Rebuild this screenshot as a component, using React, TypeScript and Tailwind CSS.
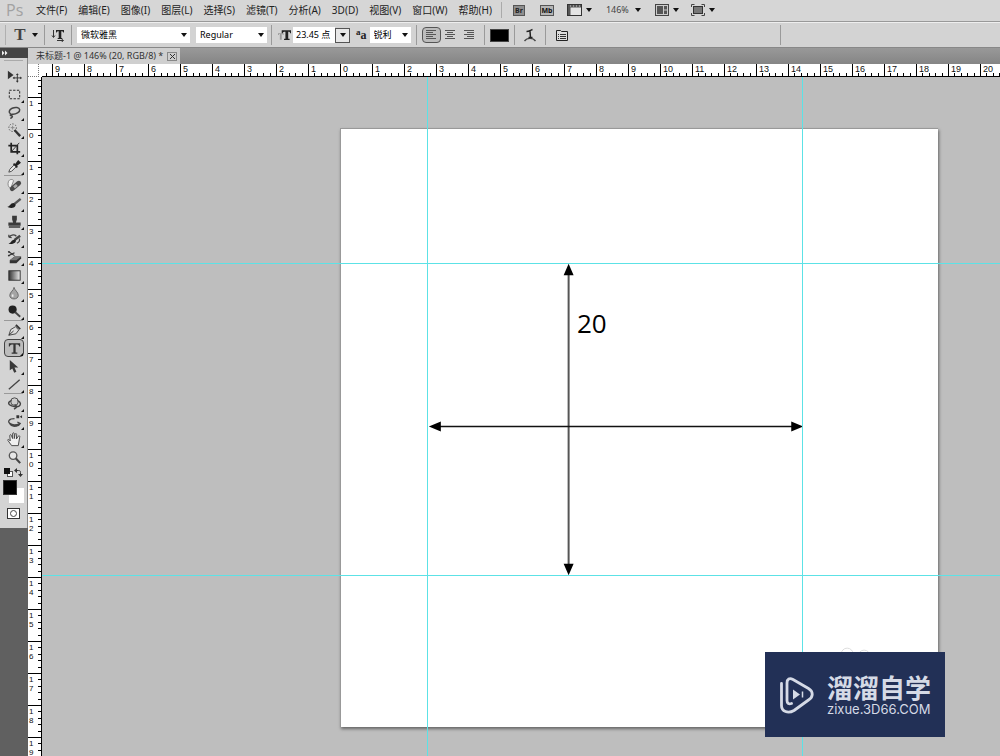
import type { ReactNode } from 'react';

const MENUS = ['文件(F)', '编辑(E)', '图像(I)', '图层(L)', '选择(S)', '滤镜(T)', '分析(A)', '3D(D)', '视图(V)', '窗口(W)', '帮助(H)'];

// -----------------------------------------------------------------------
// Tool icons, all on an 18x18 grid
// -----------------------------------------------------------------------
interface Tool {
  name: string;
  icon: ReactNode;
  flyout?: boolean;
}

const TOOL_GROUPS: Tool[][] = [
  [
    {
      name: '移动工具',
      flyout: false,
      icon: (
        <>
          <path d="M2 3v9l6-4.500z" fill="#333" />
          <path d="M12 6.500v8M8 10.500h8" stroke="#333" />
          <path d="M12 5.500l1.500 2h-3zM12 15.500l1.500-2h-3zM7 10.500l2-1.500v3zM17 10.500l-2-1.500v3z" fill="#333" />
        </>
      ),
    },
    {
      name: '矩形选框工具',
      icon: <rect x="3.500" y="4.500" width="11" height="9" fill="none" stroke="#222" strokeDasharray="2.500 1.500" />,
    },
    {
      name: '套索工具',
      icon: (
        <path
          d="M5 10.500C2.500 9.500 3 6 6.500 4.500S14 3.500 14.500 6 10.500 11 7 10.800 4 12 6 12.500 5.500 15 4.500 15"
          fill="none"
          stroke="#444"
          strokeWidth="1.600"
        />
      ),
    },
    {
      name: '快速选择工具',
      icon: (
        <>
          <circle cx="7" cy="6" r="4" fill="none" stroke="#555" strokeDasharray="1.500 1.500" />
          <path d="M9 8.500L15 15" stroke="#333" strokeWidth="2.500" />
          <path d="M7 4v4M5 6h4" stroke="#888" />
        </>
      ),
    },
    {
      name: '裁剪工具',
      icon: (
        <>
          <path d="M5.500 3v9.500H15M2.500 6h9.500v9" fill="none" stroke="#222" strokeWidth="1.800" />
          <path d="M6 12l8-9" stroke="#333" />
        </>
      ),
    },
    {
      name: '吸管工具',
      icon: (
        <>
          <path d="M3 15l1-3 5-5 2 2-5 5z" fill="#eee" stroke="#444" />
          <path d="M8 6l4 4M10 7.500l3-4 1.500 1.500-4 3z" fill="#222" stroke="#222" strokeWidth="1.800" />
        </>
      ),
    },
  ],
  [
    {
      name: '污点修复画笔工具',
      icon: (
        <>
          <path d="M2.500 5c1-3 5-3 5.500-1l-3 8c-2.500-1-3.500-4-2.500-7z" fill="#f2f2f2" stroke="#888" />
          <path d="M6.500 12.500l7-6" stroke="#4a4a4a" strokeWidth="5" strokeLinecap="round" />
          <path d="M8.500 11l3-2.500" stroke="#aaa" strokeWidth="3" />
        </>
      ),
    },
    {
      name: '画笔工具',
      icon: (
        <>
          <path d="M9 9.500L15.500 4" stroke="#555" strokeWidth="2.500" />
          <path d="M1.500 12.500c2.500 0 3-4 6.500-4 3.500 1 2.500 4.500-1 5-2 .5-4.500 0-5.500-1z" fill="#222" />
        </>
      ),
    },
    {
      name: '仿制图章工具',
      icon: <path d="M6.500 3h5v4l-1 3h5v3.500h-13V10h5l-1-3zM3 14h12v1.500H3z" fill="#3a3a3a" />,
    },
    {
      name: '历史记录画笔工具',
      icon: (
        <>
          <path d="M9 9.500L15 5" stroke="#444" strokeWidth="2.500" />
          <path d="M2.500 13.500c2.500 0 3-4.500 7-4.500 3 2-1.500 6-7 4.500z" fill="#222" />
          <path d="M3 6.500c3-3 6-3 8-1M3 6.500l3 .5M3 6.500V4M14 8c1 2 0 4-2.500 5" fill="none" stroke="#444" strokeWidth="1.300" />
        </>
      ),
    },
    {
      name: '橡皮擦工具',
      icon: (
        <>
          <path d="M4 12l5-4h7v2l-5 5H4z" fill="#333" />
          <path d="M4 12l5-4h7l-5 4z" fill="#777" />
          <path d="M3 3l6 4M3 7l6-3" stroke="#333" strokeWidth="1.200" />
          <circle cx="3" cy="3" r="1" fill="#333" />
          <circle cx="3" cy="7" r="1" fill="#333" />
        </>
      ),
    },
    {
      name: '渐变工具',
      icon: (
        <>
          <defs>
            <linearGradient id="toolGrad">
              <stop offset="0%" stopColor="#333" />
              <stop offset="100%" stopColor="#eee" />
            </linearGradient>
          </defs>
          <rect x="3" y="4" width="12" height="10" fill="url(#toolGrad)" stroke="#333" />
        </>
      ),
    },
    {
      name: '模糊工具',
      icon: (
        <>
          <path d="M8.500 2.500c0 3-4.500 5-4.500 8.500 0 5 9 5 9 0 0-3.500-4-5.500-4.500-8.500z" fill="#a4a4a4" stroke="#666" />
          <path d="M7 10v2.500" stroke="#eee" strokeWidth="1.800" />
        </>
      ),
    },
    {
      name: '减淡工具',
      icon: (
        <>
          <circle cx="7" cy="7" r="4.300" fill="#222" />
          <path d="M9.500 9.500l5.500 5" stroke="#444" strokeWidth="2" />
        </>
      ),
    },
  ],
  [
    {
      name: '钢笔工具',
      icon: (
        <>
          <path d="M3 14l2-6 5-3 3.500 3.500-3 4L3 14z" fill="#ddd" stroke="#444" />
          <path d="M3 14l5-4.500" stroke="#333" />
          <path d="M10.500 3l4.500 4.500" stroke="#333" strokeWidth="2" />
        </>
      ),
    },
    {
      name: '横排文字工具',
      icon: <path d="M3 3.500h12V7h-1c-.2-1.500-1-2.200-2.200-2.200H10.200v8.400H12v1.300H6v-1.300h1.800V4.800H6.200C5 4.800 4.200 5.500 4 7H3z" fill="#333" />,
    },
    { name: '路径选择工具', icon: <path d="M4 2v11l2.700-2 2 4.500 2.300-1-2-4.500h4z" fill="#3a3a3a" /> },
    { name: '直线工具', icon: <path d="M3 14L14.500 4" stroke="#444" strokeWidth="1.400" /> },
  ],
  [
    {
      name: '3D旋转工具',
      icon: (
        <>
          <circle cx="9" cy="7" r="4" fill="#ccc" stroke="#444" />
          <path d="M6 6C2 7 1.500 10 6 11.500s8 1 9-1-1-4-3-4.500M9 10l3 2.500-3.500 2.500" fill="none" stroke="#444" strokeWidth="1.500" />
        </>
      ),
    },
    {
      name: '3D旋转相机工具',
      icon: (
        <>
          <path d="M9 6C3 6 1.500 9 4 11s7 2 11 0M4 11.500c2 3 6 3 10 1M12 9.500l3 1.500-2 2.500" fill="none" stroke="#444" strokeWidth="1.400" />
          <path d="M11 2.500h3v3h-3zM14.500 4L17 2.500v3z" fill="#333" />
        </>
      ),
    },
    {
      name: '抓手工具',
      icon: (
        <path
          d="M6 15.500l-4-5.500c-.5-1.500 1-1.500 2.500.5L4 5c0-1.500 1.500-1.500 1.800 0L7 8V3c0-1.500 1.800-1.500 1.800 0v5l.8-4.500c.3-1.300 1.900-1 1.700.3L11 8.500l2-3c.8-1 2-.3 1.500 1L13 15.500z"
          fill="#f0f0f0"
          stroke="#444"
        />
      ),
    },
    {
      name: '缩放工具',
      flyout: false,
      icon: (
        <>
          <circle cx="7.500" cy="7" r="4" fill="#e6e6e6" stroke="#555" strokeWidth="1.400" />
          <path d="M10.500 10l4.500 5" stroke="#444" strokeWidth="2.200" />
        </>
      ),
    },
  ],
];

function Caret({ className = '' }: { className?: string }) {
  return (
    <svg viewBox="0 0 6 4" className={`w-[6px] h-[4px] shrink-0 ${className}`} aria-hidden="true">
      <path d="M0 0h6L3 4z" fill="#111" />
    </svg>
  );
}

function Divider() {
  return <span className="h-5 w-px shrink-0 bg-[#9a9a9a]" />;
}

// -----------------------------------------------------------------------
// Top bars
// -----------------------------------------------------------------------
function MenuBar() {
  return (
    <header className="flex h-[22px] shrink-0 items-center border-b border-[#999] bg-[#d6d6d6] pb-px pl-[6px] text-[10px] text-[#222]">
      <span className="w-[30px] font-['Open_Sans',sans-serif] text-[16px] leading-5 text-[#a2a2a2]">Ps</span>
      <nav className="flex gap-[11px]">
        {MENUS.map((m) => (
          <button key={m} type="button" className="whitespace-nowrap">
            {m}
          </button>
        ))}
      </nav>
      <span className="ml-[9px] h-4 w-px bg-[#aaa]" />
      <button type="button" aria-label="Bridge" className="ml-[11px] h-[11px] w-[12px] border border-[#555] bg-[#8e8e8e] text-[7px] leading-[9px] font-bold text-[#222]">
        Br
      </button>
      <button type="button" aria-label="Mini Bridge" className="ml-[15px] h-[11px] w-[14px] border border-[#555] bg-[#b5b5b5] text-[7px] leading-[9px] font-bold text-[#111]">
        Mb
      </button>
      <button type="button" aria-label="查看额外内容" className="ml-[13px] flex items-center gap-1">
        <svg viewBox="0 0 15 12" className="h-3 w-[15px]">
          <rect x=".5" y=".5" width="14" height="11" fill="#e4e4e4" stroke="#333" />
          <path d="M1 1h13v2.500H3.500V11H1z" fill="#555" />
          <path d="M3 2h11" stroke="#ccc" strokeDasharray="1 2" />
        </svg>
        <Caret />
      </button>
      <button type="button" className="ml-[14px] flex items-center gap-[6px] text-[9px] text-[#444]">
        146%
        <Caret />
      </button>
      <button type="button" aria-label="排列文档" className="ml-[14px] flex items-center gap-1">
        <svg viewBox="0 0 14 12" className="h-3 w-[14px]">
          <rect x=".5" y=".5" width="13" height="11" fill="#ccc" stroke="#444" />
          <path d="M2 2h6v8H2zM9 2h3v3.500H9zM9 6.500h3V10H9z" fill="#555" />
        </svg>
        <Caret />
      </button>
      <button type="button" aria-label="屏幕模式" className="ml-3 flex items-center gap-1">
        <svg viewBox="0 0 14 12" className="h-3 w-[14px]">
          <rect x="2.500" y="2.500" width="9" height="7" fill="#777" stroke="#333" />
          <path d="M.5 3V.5h3M10.500.5h3V3M.5 9v2.500h3M10.500 11.500h3V9" fill="none" stroke="#444" />
        </svg>
        <Caret />
      </button>
    </header>
  );
}

function OptionSelect({ label, value, className }: { label: string; value: string; className: string }) {
  return (
    <label className={`relative flex h-4 items-center bg-white ${className}`}>
      <select aria-label={label} className="h-4 w-full appearance-none bg-transparent pl-1 text-[9px] leading-4 text-black">
        <option>{value}</option>
      </select>
      <Caret className="pointer-events-none absolute right-[3px]" />
    </label>
  );
}

function AlignIcon({ lines }: { lines: string }) {
  return (
    <svg viewBox="0 0 12 12" className="h-3 w-3">
      <path d={lines} stroke="#555" />
    </svg>
  );
}

function OptionsBar() {
  return (
    <div className="flex h-[26px] shrink-0 items-center border-t border-b border-t-[#eee] border-b-[#888] bg-[#d3d3d3] text-[9px]">
      <span className="ml-[5px] h-5 w-px bg-[#b0b0b0]" />
      <button type="button" aria-label="文字工具预设" className="ml-2 flex items-center gap-[6px] pr-[6px]">
        <span className="w-3 font-['Liberation_Serif',serif] text-[17px] leading-5 font-bold text-[#444]">T</span>
        <Caret />
      </button>
      <Divider />
      <button type="button" aria-label="切换文本取向" className="mx-[6px]">
        <svg viewBox="0 0 14 14" className="h-[14px] w-[14px]">
          <path d="M2.500 2v7M1 7.500l1.500 2L4 7.500M6 12.500h6M10.500 11l2 1.500-2 1.500" fill="none" stroke="#333" />
          <path d="M5 2h8v2.500h-.7c-.3-1-.8-1.300-2-1.300V10h1v1H6.700v-1h1V3.200c-1.200 0-1.700.3-2 1.300H5z" fill="#222" />
        </svg>
      </button>
      <Divider />
      <OptionSelect label="字体" value="微软雅黑" className="ml-[5px] w-[113px]" />
      <OptionSelect label="字体样式" value="Regular" className="mr-1 ml-[6px] w-[71px]" />
      <Divider />
      <svg viewBox="0 0 14 12" className="ml-[6px] h-3 w-[13px] shrink-0">
        <path d="M0 4h6v2H5V5H4v6H2V5H1v1H0z" fill="#999" />
        <path d="M4 1h10v3h-1c0-1-.5-1.500-2-1.500V10h1.500v1.500h-6V10H8V2.500C6 2.500 5.500 3 5 4H4z" fill="#222" />
      </svg>
      <input aria-label="字体大小" defaultValue="23.45 点" className="ml-[2px] h-4 w-[42px] bg-white px-[3px] text-[9px] leading-4 text-black" />
      <button type="button" aria-label="选择字体大小" className="flex h-[15px] w-[15px] items-center justify-center border border-[#555] bg-[#e8e8e8]">
        <Caret />
      </button>
      <span className="ml-[6px] font-['Liberation_Serif',serif] text-[12px] leading-3 font-bold text-[#222]">
        <sup className="text-[9px]">a</sup>a
      </span>
      <OptionSelect label="消除锯齿" value="锐利" className="mr-[5px] ml-[3px] w-[41px]" />
      <Divider />
      <div className="mx-[5px] flex">
        <button type="button" aria-label="左对齐" className="flex h-4 w-[19px] items-center justify-center rounded-sm border border-[#555] bg-[#bcbcbc]">
          <AlignIcon lines="M1 1.500h10M1 3.500h7M1 5.500h10M1 7.500h7M1 9.500h10" />
        </button>
        <button type="button" aria-label="居中" className="flex h-4 w-[19px] items-center justify-center">
          <AlignIcon lines="M1 1.500h10M3 3.500h6M1 5.500h10M3 7.500h6M1 9.500h10" />
        </button>
        <button type="button" aria-label="右对齐" className="flex h-4 w-[19px] items-center justify-center">
          <AlignIcon lines="M1 1.500h10M4 3.500h7M1 5.500h10M4 7.500h7M1 9.500h10" />
        </button>
      </div>
      <Divider />
      <button type="button" aria-label="文本颜色" className="mx-[5px] h-[13px] w-[19px] border border-[#444] bg-black" />
      <Divider />
      <button type="button" aria-label="变形文字" className="mx-2">
        <svg viewBox="0 0 14 14" className="h-[14px] w-[14px]">
          <path d="M1.500 13C4 9.500 10 9.500 12.500 13" fill="none" stroke="#444" strokeWidth="1.300" />
          <path d="M3.500 3.500C6 3.500 7 2.500 9.500 1.500M7 3l.5 7M5.500 9.500h4" fill="none" stroke="#222" strokeWidth="1.500" />
        </svg>
      </button>
      <Divider />
      <button type="button" aria-label="字符和段落面板" className="ml-[10px]">
        <svg viewBox="0 0 12 12" className="h-3 w-3">
          <path d="M.500 1.500h4l1 1h6v9H.500z" fill="#ddd" stroke="#222" />
          <path d="M2 5.500h1M4 5.500h6M2 7.500h1M4 7.500h6M2 9.500h1M4 9.500h6" stroke="#333" />
        </svg>
      </button>
      <span className="ml-[212px] h-5 w-px bg-[#9a9a9a]" />
    </div>
  );
}

// -----------------------------------------------------------------------
// Tool box on the left
// -----------------------------------------------------------------------
function ToolBox() {
  return (
    <aside className="w-7 shrink-0 bg-[#606060]">
      <button type="button" aria-label="折叠面板" className="flex h-[10px] w-full items-center bg-[#444] pl-[2px]">
        <svg viewBox="0 0 6 6" className="h-[6px] w-[6px]">
          <path d="M0 .5L2.500 3 0 5.500zM3 .5L5.500 3 3 5.500z" fill="#eee" />
        </svg>
      </button>
      <div className="border-r border-[#888] bg-[#d4d4d4] px-1 pb-[9px]">
        <div className="mb-[6px] h-[3px] border-b border-[#aaa]" />
        {TOOL_GROUPS.map((group, i) => (
          <div key={i} className={i > 0 ? 'border-t border-[#999]' : ''}>
            {group.map((tool) => (
              <button
                key={tool.name}
                type="button"
                aria-label={tool.name}
                className={`relative flex h-[18px] w-[20px] items-center justify-center rounded-sm ${
                  tool.name === '横排文字工具' ? 'border border-[#444] bg-[#bdbdbd]' : ''
                }`}
              >
                <svg viewBox="0 0 18 18" fill="none" className="h-[17px] w-[17px] shrink-0">
                  {tool.icon}
                </svg>
                {tool.flyout !== false && (
                  <svg viewBox="0 0 3 3" className="absolute right-0 bottom-0 h-[3px] w-[3px]">
                    <path d="M3 0v3H0z" fill="#111" />
                  </svg>
                )}
              </button>
            ))}
          </div>
        ))}
        <div className="flex h-3 items-center justify-between">
          <svg viewBox="0 0 9 9" className="h-[9px] w-[9px]">
            <rect x="3.500" y="3.500" width="5" height="5" fill="#fff" stroke="#555" />
            <rect width="6" height="6" fill="#111" />
          </svg>
          <svg viewBox="0 0 9 9" className="h-[9px] w-[9px]">
            <path d="M2 2.500h2.500c1.500 0 2 .5 2 2V7" fill="none" stroke="#333" />
            <path d="M0 2.500L3 0v5zM6.500 9L4 6h5z" fill="#333" />
          </svg>
        </div>
        <div className="relative -mx-px mt-[2px] h-[23px]">
          <button type="button" aria-label="背景色" className="absolute right-0 bottom-0 h-[15px] w-[15px] bg-white" />
          <button type="button" aria-label="前景色" className="absolute top-0 left-0 h-[15px] w-[14px] border border-[#333] bg-black" />
        </div>
        <button type="button" aria-label="快速蒙版" className="mx-auto mt-[5px] flex h-[11px] w-[13px] items-center justify-center border border-[#333] bg-white">
          <span className="h-[7px] w-[7px] rounded-full border border-[#444]" />
        </button>
      </div>
    </aside>
  );
}

// -----------------------------------------------------------------------
// Rulers: one 32px cell per centimetre, five ticks in each
// -----------------------------------------------------------------------
const H_LABELS = Array.from({ length: 30 }, (_, i) => Math.abs(i - 9));
const V_LABELS = Array.from({ length: 21 }, (_, i) => Math.abs(i - 1));

function HorizontalRuler() {
  return (
    <div className="flex h-[13px] min-w-0 flex-1 overflow-hidden border-b border-black bg-white font-['Liberation_Sans',sans-serif]">
      <div className="flex w-[10px] shrink-0 items-end">
        <span className="ml-1 h-[3px] w-px bg-black" />
      </div>
      {H_LABELS.map((n, i) => (
        <div key={i} className="relative flex w-8 shrink-0 items-end border-l border-black">
          <span className="absolute top-0 left-[2px] text-[9px] leading-[11px]">{n}</span>
          <span className="flex-1" />
          {[1, 2, 3, 4].map((t) => (
            <span key={t} className="h-[3px] flex-1 border-l border-black" />
          ))}
        </div>
      ))}
    </div>
  );
}

function VerticalRuler() {
  return (
    <div className="flex w-[14px] shrink-0 flex-col overflow-hidden border-r border-black bg-white font-['Liberation_Sans',sans-serif]">
      <div className="flex h-5 shrink-0 flex-col items-end justify-around">
        <span className="h-px w-[3px] bg-black" />
        <span className="h-px w-[3px] bg-black" />
        <span className="h-px w-[3px] bg-black" />
      </div>
      {V_LABELS.map((n, i) => (
        <div key={i} className="relative flex h-8 shrink-0 flex-col items-end border-t border-black">
          <span className="absolute top-px left-[1px] flex flex-col text-[8px] leading-[9px]">
            {String(n).split('').map((d, j) => (
              <span key={j}>{d}</span>
            ))}
          </span>
          <span className="flex-1" />
          {[1, 2, 3, 4].map((t) => (
            <span key={t} className="w-[3px] flex-1 border-t border-black" />
          ))}
        </div>
      ))}
    </div>
  );
}

// -----------------------------------------------------------------------
// Canvas with the document, guides and dimension arrows
// -----------------------------------------------------------------------
function Canvas() {
  return (
    <main className="relative min-w-0 flex-1 overflow-hidden bg-[#bebebe]">
      <div className="absolute top-[51px] left-[298px] h-[599px] w-[598px] border-t border-l border-[#999] bg-white shadow-[1px_2px_3px_#666]">
        <svg viewBox="0 0 598 599" className="absolute inset-0 h-full w-full">
          <path d="M228 144v294" stroke="#555" strokeWidth="2" />
          <path d="M98 298h356" stroke="#111" strokeWidth="1.500" />
          <path d="M228 135l5 11.500h-10zM228 447l5-11.500h-10zM88 298l12-5v10zM463 298l-12-5v10z" fill="#000" />
          <circle cx="507" cy="526" r="6" fill="none" stroke="#ddd" />
          <circle cx="524" cy="528" r="6" fill="none" stroke="#ddd" />
        </svg>
        <span className="absolute top-[178px] left-[236px] font-['Open_Sans',sans-serif] text-[26px] leading-8 text-black">20</span>
      </div>

      {/* Guides */}
      <span className="absolute inset-y-0 left-[385px] w-px bg-[#5ce2e6]" />
      <span className="absolute inset-y-0 left-[760px] w-px bg-[#5ce2e6]" />
      <span className="absolute inset-x-0 top-[186px] h-px bg-[#5ce2e6]" />
      <span className="absolute inset-x-0 top-[498px] h-px bg-[#5ce2e6]" />
    </main>
  );
}

function Watermark() {
  return (
    <div className="absolute right-[55px] bottom-[19px] flex h-[85px] w-[180px] items-center gap-3 bg-[#223056] pl-[14px] text-[#d5dae6]">
      <svg viewBox="0 0 36 38" className="h-[38px] w-9 shrink-0" fill="none" stroke="currentColor" strokeLinejoin="round" strokeLinecap="round">
        <path d="M12.500 27.500c-3 1-4.500-.5-4.500-3V7c0-4 2.500-5.500 6-3.500l15.500 9c5 3 5 8.500 0 11.500L15 34.500c-6 3.500-12.500 1-12.500-5V7.500" strokeWidth="2.800" />
        <path d="M14 13.500l7 5-7 5z" fill="currentColor" stroke="none" />
        <path d="M23.500 15.500v6" strokeWidth="1.500" strokeLinecap="butt" />
      </svg>
      <div className="whitespace-nowrap">
        <p className="text-[26px] leading-7 font-bold">溜溜自学</p>
        <p className="font-[Inter,sans-serif] text-[13px] leading-[14px]">zixue.3D66.COM</p>
      </div>
    </div>
  );
}

export default function App() {
  return (
    <div className="relative flex h-screen flex-col overflow-hidden bg-[#bebebe] font-['Noto_Sans','Noto_Sans_CJK_SC',sans-serif] text-[#111]">
      <MenuBar />
      <OptionsBar />
      <div className="flex min-h-0 flex-1">
        <ToolBox />
        <div className="flex min-w-0 flex-1 flex-col">
          <div className="flex h-4 shrink-0 bg-linear-to-b from-[#999] to-[#858585]">
            <div className="flex items-center gap-1 bg-[#cfcfcf] pr-[3px] pl-2 text-[9px] text-[#333]">
              <span className="whitespace-nowrap">未标题-1 @ 146% (20, RGB/8) *</span>
              <button type="button" aria-label="关闭" className="flex h-[9px] w-[10px] items-center justify-center border border-[#888]">
                <svg viewBox="0 0 5 5" className="h-[5px] w-[5px]">
                  <path d="M0 0l5 5M5 0L0 5" stroke="#333" />
                </svg>
              </button>
            </div>
          </div>
          <div className="flex shrink-0">
            <div className="flex h-[13px] w-[14px] shrink-0 bg-white">
              <span className="h-full w-[11px] border-r border-b border-dotted border-[#777]" />
            </div>
            <HorizontalRuler />
          </div>
          <div className="flex min-h-0 flex-1">
            <VerticalRuler />
            <Canvas />
          </div>
        </div>
      </div>
      <Watermark />
    </div>
  );
}
